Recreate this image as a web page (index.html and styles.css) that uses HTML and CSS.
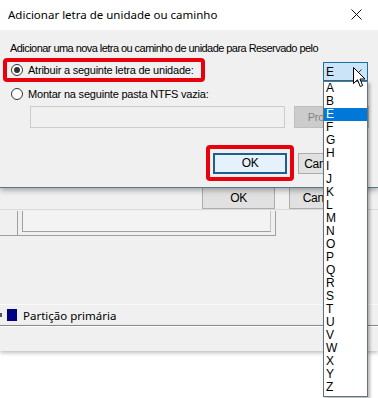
FILE: index.html
```html
<!DOCTYPE html>
<html>
<head>
    <link rel="stylesheet" href="styles.css">
</head>
<body>
    <div class="screen">
        <div class="dialog">
            <div class="titlebar">
                <span class="title">Adicionar letra de unidade ou caminho</span>
                <svg class="close" width="11" height="11" viewBox="0 0 11 11">
                    <path d="M0.5 0.5 L10.5 10.5 M10.5 0.5 L0.5 10.5" stroke="#111" stroke-width="1" fill="none"/>
                </svg>
            </div>
            <div class="dialog-body">
                <p class="intro">Adicionar uma nova letra ou caminho de unidade para Reservado pelo</p>
                <div class="assign-row">
                    <div class="mark mark-radio">
                        <span class="radio checked"></span>
                        <span>Atribuir a seguinte letra de unidade:</span>
                    </div>
                    <div class="combo">
                        <span>E</span>
                        <svg class="chevron" width="9" height="6" viewBox="0 0 9 6">
                            <path d="M0.5 0.5 L4.5 4.5 L8.5 0.5" stroke="#333" stroke-width="1" fill="none"/>
                        </svg>
                    </div>
                </div>
                <div class="radio-row">
                    <span class="radio"></span>
                    <span>Montar na seguinte pasta NTFS vazia:</span>
                </div>
                <div class="path-row">
                    <div class="textbox"></div>
                    <div class="btn btn-disabled">Procurar...</div>
                </div>
                <div class="actions">
                    <div class="mark mark-ok">
                        <div class="btn btn-default">OK</div>
                    </div>
                    <div class="btn btn-cancel">Cancelar</div>
                </div>
            </div>
        </div>

        <div class="backwin">
            <div class="back-actions">
                <div class="btn">OK</div>
                <div class="btn">Cancelar</div>
            </div>
            <div class="frames">
                <div class="stub"></div>
                <div class="frame"><div class="frame-inner"></div></div>
            </div>
            <div class="legend">
                <span class="dot"></span>
                <span class="swatch"></span>
                <span>Partição primária</span>
            </div>
            <div class="statusbar"></div>
        </div>
        <div class="desktop"></div>

        <ul class="droplist" id="droplist"></ul>

        <svg class="cursor" width="13" height="21" viewBox="0 0 13 21">
            <path d="M0.5 0.5 L0.5 16.5 L4.5 12.8 L7.2 19.5 L9.6 18.5 L7 12 L12 12 Z" fill="#fff" stroke="#000" stroke-width="1"/>
        </svg>
    </div>
    <script>
        var letters = ["A","B","E","F","G","H","I","J","K","L","M","N","O","P","Q","R","S","T","U","V","W","X","Y","Z"];
        var list = document.getElementById("droplist");
        for (var i=0;i<letters.length;i++)
        {
            var item = document.createElement("li");
            item.textContent = letters[i];
            if (letters[i] == "E")
            {
                item.className = "selected";
            }
            list.appendChild(item);
        }
    </script>
</body>
</html>
```

FILE: styles.css
```css
body
{
    margin: 0;
    background: #ffffff;
    font-family: "Liberation Sans", Arial, sans-serif;
    font-size: 11px;
    color: #000;
}
.screen
{
    position: relative;
    width: 378px;
    height: 398px;
    overflow: hidden;
    background: #f0f0f0;
}
.dialog
{
    position: relative;
    z-index: 2;
    background: #f0f0f0;
    border-bottom: 1px solid #56798a;
    box-shadow: 0 2px 6px rgba(0,0,0,0.35);
}
.titlebar
{
    height: 30px;
    background: #ffffff;
    display: flex;
    align-items: center;
    justify-content: space-between;
    padding: 0 16px 0 8px;
}
.title
{
    font-family: "Noto Sans", sans-serif;
    font-size: 11.5px;
    margin-top: -2px;
}
.close
{
    margin-top: -2px;
}
.dialog-body
{
    padding: 12px 0 6px 3px;
}
.intro
{
    margin: 0 0 4px 7px;
    line-height: 12px;
    letter-spacing: -0.55px;
}
.assign-row
{
    display: flex;
    align-items: flex-start;
    justify-content: space-between;
    height: 24px;
}
.mark
{
    border: 4px solid #e8000c;
    border-radius: 4px;
    box-sizing: border-box;
}
.mark-radio
{
    width: 202px;
    height: 24px;
    display: flex;
    align-items: center;
    padding-left: 4px;
    gap: 5px;
    letter-spacing: -0.22px;
}
.radio
{
    width: 10px;
    height: 10px;
    border: 1px solid #333;
    border-radius: 50%;
    background: #fff;
    display: inline-flex;
    align-items: center;
    justify-content: center;
    flex: none;
}
.radio.checked::after
{
    content: "";
    width: 6px;
    height: 6px;
    border-radius: 50%;
    background: #333;
}
.combo
{
    margin: 4px 10px 0 0;
    width: 45px;
    height: 19px;
    box-sizing: border-box;
    border: 1px solid #1c6ea4;
    background: #cce4f7;
    display: flex;
    align-items: center;
    justify-content: space-between;
    padding: 0 5px 0 2px;
    font-size: 12px;
}
.radio-row
{
    margin-top: 4px;
    height: 16px;
    display: flex;
    align-items: center;
    gap: 5px;
    padding-left: 8px;
    letter-spacing: -0.2px;
}
.path-row
{
    margin-top: 4px;
    display: flex;
    gap: 9px;
    padding-left: 27px;
}
.textbox
{
    width: 255px;
    height: 22px;
    box-sizing: border-box;
    border: 1px solid #cccccc;
    background: #f0f0f0;
}
.btn
{
    height: 21px;
    box-sizing: border-box;
    border: 1px solid #adadad;
    background: #e1e1e1;
    display: flex;
    align-items: center;
    justify-content: center;
    flex: none;
    font-size: 11px;
    letter-spacing: -0.3px;
    white-space: nowrap;
}
.btn-disabled
{
    width: 75px;
    height: 22px;
    border-color: #bfbfbf;
    background: #cccccc;
    color: #838383;
}
.actions
{
    margin-top: 17px;
    display: flex;
    align-items: center;
    gap: 4px;
    padding-left: 203px;
}
.mark-ok
{
    width: 88px;
    height: 36px;
    display: flex;
    align-items: center;
    justify-content: center;
}
.btn-default
{
    width: 74px;
    border: 2px solid #1d5f8f;
    background: #e5f1fb;
    font-size: 12px;
}
.btn-cancel
{
    width: 58px;
    margin-top: 1px;
    font-size: 12px;
}
.backwin
{
    position: relative;
    z-index: 1;
}
.back-actions
{
    display: flex;
    gap: 14px;
    padding-left: 202px;
    margin-top: -2px;
}
.back-actions .btn
{
    width: 73px;
    height: 23px;
    font-size: 12px;
}
.frames
{
    display: flex;
    align-items: flex-end;
    height: 26px;
    border-top: 1px solid #dadada;
}
.stub
{
    width: 17px;
    height: 8px;
    border-bottom: 1px solid #a0a0a0;
}
.frame
{
    width: 259px;
    height: 25px;
    border: 1px solid #a0a0a0;
    border-top: none;
    padding: 0 4px 4px 4px;
    box-sizing: border-box;
}
.frame-inner
{
    height: 100%;
    border: 1px solid #a0a0a0;
    border-top: none;
    border-right-color: #c4c4c4;
    background: #f3f3f3;
}
.legend
{
    margin-top: 68px;
    height: 20px;
    border-top: 1px solid #fbfbfb;
    border-bottom: 1px solid #8c8c8c;
    display: flex;
    align-items: center;
    font-family: "Noto Sans", sans-serif;
    font-size: 11.5px;
}
.dot
{
    width: 2px;
    height: 4px;
    background: #555;
    margin-right: 5px;
}
.swatch
{
    width: 10px;
    height: 12px;
    background: #000080;
    margin-right: 6px;
}
.statusbar
{
    height: 24px;
    border-top: 1px solid #ffffff;
    background: #f0f0f0;
    box-shadow: 0 2px 4px rgba(0,0,0,0.25);
}
.desktop
{
    height: 60px;
    background: #ffffff;
}
/* open drop-down of the letter combo, lies over both windows */
.droplist
{
    position: absolute;
    z-index: 3;
    left: 323px;
    top: 81px;
    width: 45px;
    margin: 0;
    padding: 0 0 2px 0;
    list-style: none;
    background: #fff;
    border: 1px solid #64727a;
    box-sizing: border-box;
    box-shadow: 2px 2px 3px rgba(0,0,0,0.3);
}
.droplist li
{
    height: 13px;
    line-height: 13px;
    padding-left: 2px;
    font-size: 12px;
}
.droplist li.selected
{
    background: #0078d7;
    color: #fff;
}
.cursor
{
    position: absolute;
    z-index: 4;
    left: 353px;
    top: 67px;
}
```
